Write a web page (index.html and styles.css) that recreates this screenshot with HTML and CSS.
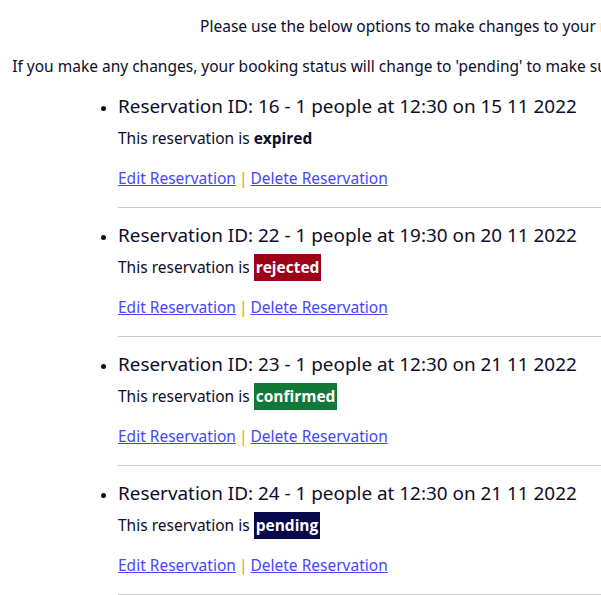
FILE: index.html
```html
<!DOCTYPE html>
<html lang="en">
<head>
<meta charset="utf-8">
<link rel="stylesheet" href="styles.css">
<title>My Reservations</title>
</head>
<body>
<div class="page">
  <div class="intro">
    <p class="intro-line">Please use the below options to make changes to your reservations.</p>
    <p class="intro-line">If you make any changes, your booking status will change to 'pending' to make sure that we can still accommodate you.</p>
  </div>
  <ul class="res-list">
    <li class="res-item">
      <h3 class="res-title">Reservation ID: 16 - 1 people at 12:30 on 15 11 2022</h3>
      <p class="res-status">This reservation is <span class="status status-expired">expired</span></p>
      <p class="res-actions"><a href="#">Edit Reservation</a> <span class="sep">|</span> <a href="#">Delete Reservation</a></p>
      <hr class="res-rule">
    </li>
    <li class="res-item">
      <h3 class="res-title">Reservation ID: 22 - 1 people at 19:30 on 20 11 2022</h3>
      <p class="res-status">This reservation is <span class="status status-rejected">rejected</span></p>
      <p class="res-actions"><a href="#">Edit Reservation</a> <span class="sep">|</span> <a href="#">Delete Reservation</a></p>
      <hr class="res-rule">
    </li>
    <li class="res-item">
      <h3 class="res-title">Reservation ID: 23 - 1 people at 12:30 on 21 11 2022</h3>
      <p class="res-status">This reservation is <span class="status status-confirmed">confirmed</span></p>
      <p class="res-actions"><a href="#">Edit Reservation</a> <span class="sep">|</span> <a href="#">Delete Reservation</a></p>
      <hr class="res-rule">
    </li>
    <li class="res-item">
      <h3 class="res-title">Reservation ID: 24 - 1 people at 12:30 on 21 11 2022</h3>
      <p class="res-status">This reservation is <span class="status status-pending">pending</span></p>
      <p class="res-actions"><a href="#">Edit Reservation</a> <span class="sep">|</span> <a href="#">Delete Reservation</a></p>
      <hr class="res-rule">
    </li>
  </ul>
</div>
</body>
</html>
```

FILE: styles.css
```css
html, body {
  margin: 0;
  padding: 0;
  overflow: hidden;
  background: #ffffff;
}
body {
  font-family: "Noto Sans", "Open Sans", sans-serif;
  color: #0d0d2a;
  font-size: 15.5px;
}
.page {
  padding: 0 0 0 8px;
  width: 878px;
}
.intro {
  padding-top: 16px;
}
.intro-line {
  margin: 0 0 20px;
  text-align: center;
  white-space: nowrap;
  line-height: 20px;
}
.intro-line:last-child {
  margin-bottom: 16px;
}
.res-list {
  margin: 0;
  padding: 0 0 0 110px;
  width: 560px;
}
.res-item {
  font-size: 18.9px;
}
.res-item::marker {
  font-size: 15px;
}
.res-title {
  font-size: 18.9px;
  font-weight: 400;
  margin: 0;
  line-height: 28px;
}
.res-status {
  font-size: 15.5px;
  margin: 8px 0 0;
  line-height: 20px;
}
.status {
  font-family: "Open Sans", sans-serif;
  font-weight: 700;
  padding: 2px 2px 3px;
}
.status-expired { padding: 0; }
.status-rejected { background: #9e0018; color: #fff; }
.status-confirmed { background: #14773a; color: #fff; }
.status-pending { background: #07074a; color: #fff; }
.res-actions {
  font-size: 15.5px;
  margin: 20px 0 0;
  line-height: 20px;
}
.res-actions a {
  color: #4646ff;
}
.sep {
  color: #e09a3a;
  margin: 0 -1px;
}
.res-rule {
  border: 0;
  border-top: 1px solid #cccccc;
  margin: 19px 0 13px;
  width: 520px;
}
```
